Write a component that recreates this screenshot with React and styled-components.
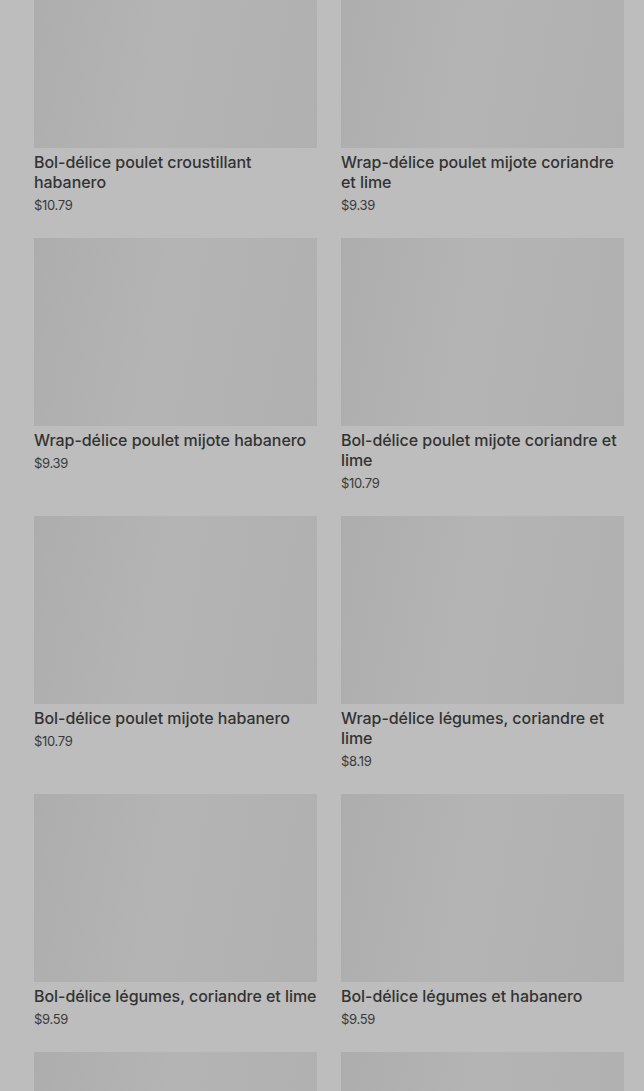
import styled, { createGlobalStyle } from 'styled-components';

const products = [
  { name: 'Bol-délice poulet croustillant habanero', price: '$10.79' },
  { name: 'Wrap-délice poulet mijote coriandre et lime', price: '$9.39' },
  { name: 'Wrap-délice poulet mijote habanero', price: '$9.39' },
  { name: 'Bol-délice poulet mijote coriandre et lime', price: '$10.79' },
  { name: 'Bol-délice poulet mijote habanero', price: '$10.79' },
  { name: 'Wrap-délice légumes, coriandre et lime', price: '$8.19' },
  { name: 'Bol-délice légumes, coriandre et lime', price: '$9.59' },
  { name: 'Bol-délice légumes et habanero', price: '$9.59' },
  { name: null, price: null },
  { name: null, price: null },
];

export default function App() {
  return (
    <>
      <GlobalStyle />
      <Page>
        <Grid>
          {products.map((p, i) => (
            <Card key={i}>
              <Thumb />
              {p.name && <Title>{p.name}</Title>}
              {p.price && <Price>{p.price}</Price>}
            </Card>
          ))}
        </Grid>
      </Page>
    </>
  );
}

const GlobalStyle = createGlobalStyle`
  html, body {
    margin: 0;
    background: #bdbdbd;
    overflow: hidden;
  }
`;

const Page = styled.div`
  height: 1091px;
  overflow: hidden;
  background: #bdbdbd;
  font-family: "Inter", "Roboto", sans-serif;
`;

const Grid = styled.div`
  display: grid;
  grid-template-columns: 283px 283px;
  column-gap: 24px;
  row-gap: 24px;
  padding: 0 20px 0 34px;
  margin-top: -40px;
`;

const Card = styled.div`
  display: flex;
  flex-direction: column;
`;

const Thumb = styled.div`
  height: 188px;
  background: linear-gradient(100deg, #adadad 0%, #b4b4b4 45%, #b0b0b0 100%);
`;

const Title = styled.div`
  margin-top: 4px;
  font-size: 16px;
  line-height: 20px;
  font-weight: 500;
  color: #333333;
  letter-spacing: -0.05px;
`;

const Price = styled.div`
  margin-top: 4px;
  font-size: 13px;
  line-height: 18px;
  color: #3a3a3a;
  letter-spacing: -0.3px;
`;
